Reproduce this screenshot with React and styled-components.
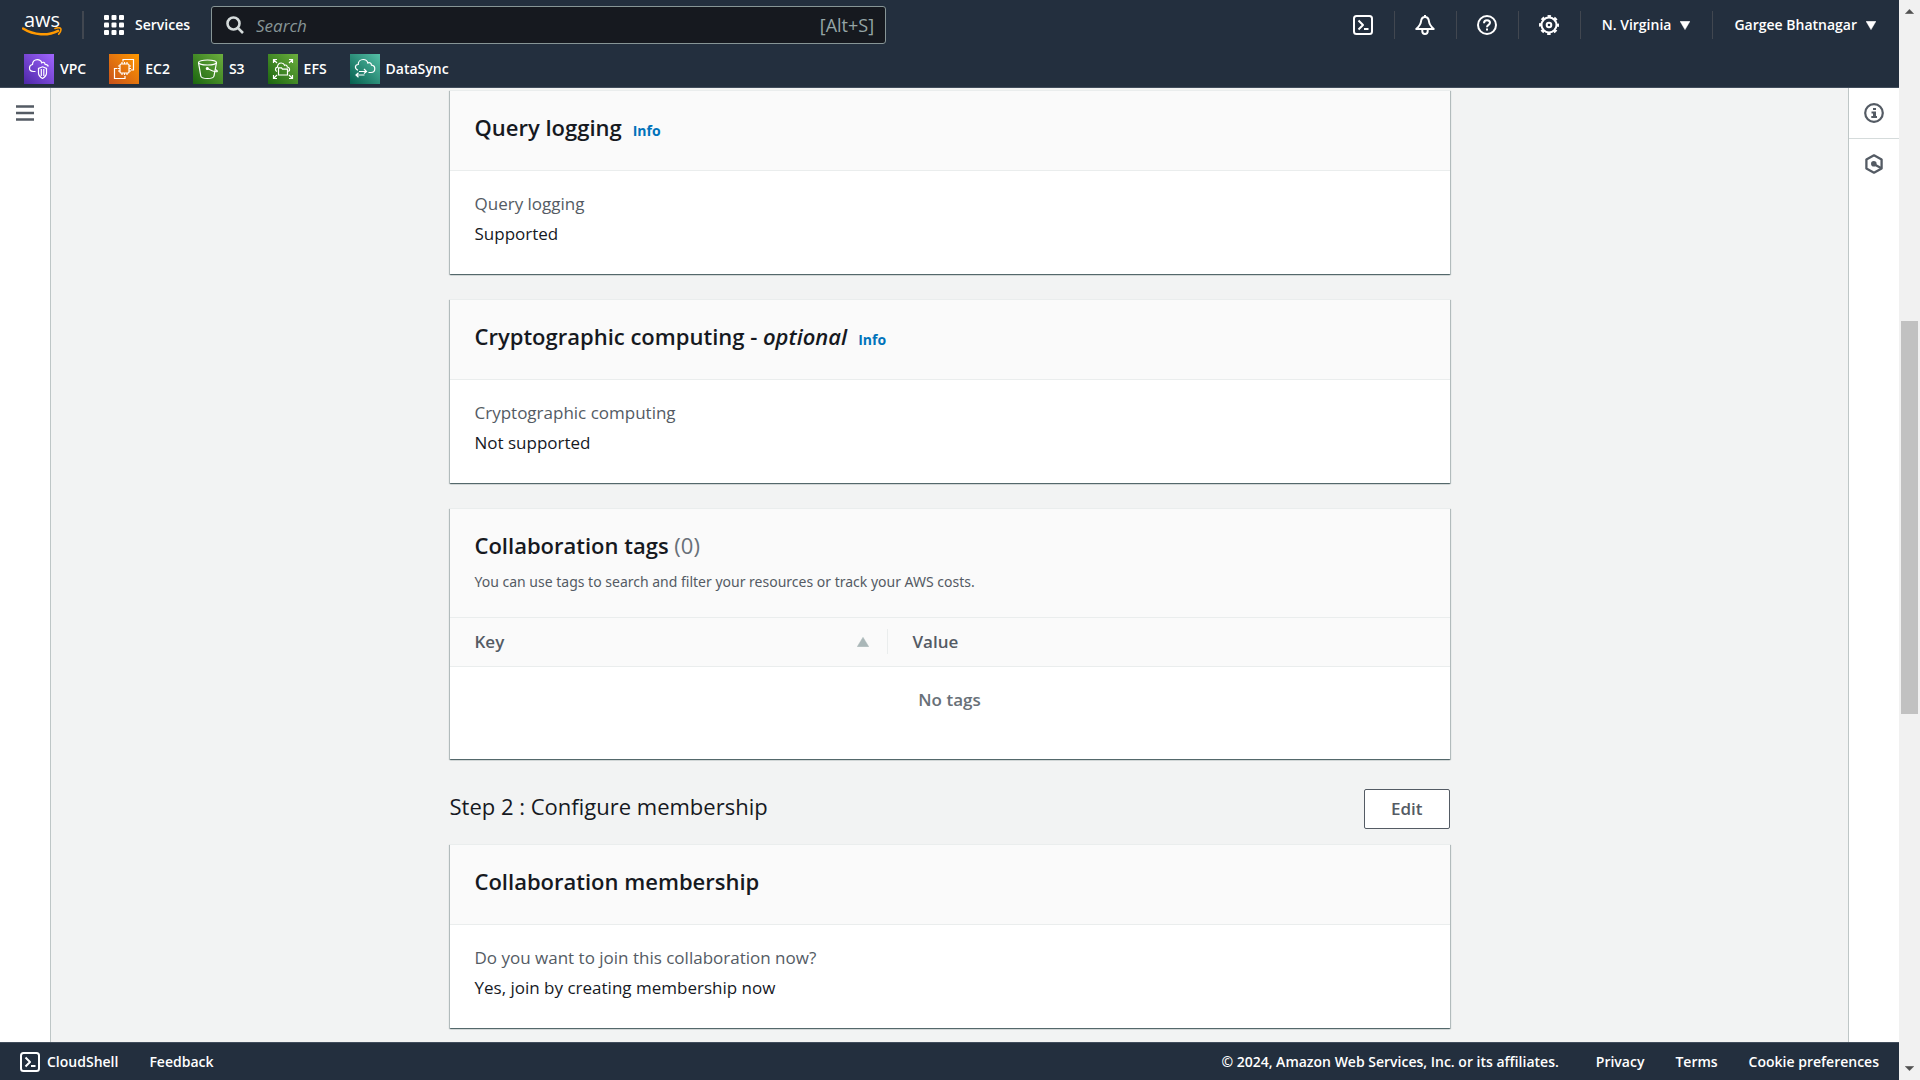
import styled, { createGlobalStyle } from "styled-components";

const GlobalStyle = createGlobalStyle`
  * {
    box-sizing: border-box;
  }

  body {
    margin: 0;
    background-color: #f2f3f3;
    color: #16191f;
    font-family: "Open Sans", "Noto Sans", sans-serif;
    font-size: 17px;
    line-height: 25px;
  }

  button,
  input {
    font: inherit;
  }
`;

const Container = styled.div`
  height: 100vh;
  display: flex;
`;

const Frame = styled.div`
  flex: 1;
  min-width: 0;
  display: flex;
  flex-direction: column;
`;

/* header */

const Header = styled.header`
  background-color: #232f3e;
  border-bottom: 1px solid #414d5c;
  color: white;
`;

const TopBar = styled.div`
  height: 50px;
  display: flex;
  align-items: center;
  justify-content: space-between;
`;

const TopGroup = styled.div`
  display: flex;
  align-items: center;
  flex: ${(props) => (props.$grow ? "1" : "none")};
  min-width: 0;
`;

const Logo = styled.a`
  width: 40px;
  margin: 0 20px 0 22px;
  display: flex;
  flex-direction: column;
  align-items: center;
  color: white;
  font-size: 20px;
  font-weight: 500;
  line-height: 15px;
  text-decoration: none;
`;

const Divider = styled.span`
  flex: none;
  width: ${(props) => (props.$thick ? "2px" : "1px")};
  height: 28px;
  background-color: #414750;
`;

const BarButton = styled.button`
  flex: none;
  display: flex;
  align-items: center;
  gap: ${(props) => props.$gap || "11px"};
  padding: ${(props) => props.$padding || "0 21px 0 20px"};
  border: none;
  background: none;
  color: white;
  font-size: 14px;
  font-weight: 600;
  line-height: 20px;
  white-space: nowrap;
  cursor: pointer;
`;

const Search = styled.label`
  flex: 0 1 675px;
  height: 38px;
  display: flex;
  align-items: center;
  gap: 12px;
  padding: 0 11px 0 14px;
  border: 1px solid #879596;
  border-radius: 3px;
  background-color: #16191f;
  color: #95a5a6;
`;

const SearchInput = styled.input`
  flex: 1;
  min-width: 0;
  padding: 0;
  border: none;
  outline: none;
  background: none;
  color: white;

  &::placeholder {
    color: #879596;
    font-style: italic;
    opacity: 1;
  }
`;

const Hint = styled.span`
  font-size: 18px;
`;

const Favorites = styled.nav`
  height: 37px;
  display: flex;
  align-items: center;
  gap: 23px;
  padding: 0 24px;
`;

const Favorite = styled.a`
  display: flex;
  align-items: center;
  gap: 6px;
  color: white;
  font-size: 14px;
  font-weight: 600;
  text-decoration: none;
`;

/* body */

const Body = styled.div`
  flex: 1;
  min-height: 0;
  display: flex;
`;

const LeftRail = styled.aside`
  flex: none;
  width: 51px;
  background-color: white;
  border-right: 1px solid #bec6c6;
`;

const RightRail = styled.aside`
  flex: none;
  width: 51px;
  background-color: white;
  border-left: 1px solid #bec6c6;
`;

const RailButton = styled.button`
  width: 100%;
  height: 51px;
  display: flex;
  align-items: center;
  justify-content: center;
  padding: 0;
  border: none;
  border-bottom: 1px solid ${(props) => (props.$line ? "#d5dbdb" : "transparent")};
  background: none;
  color: #545b64;
  cursor: pointer;
`;

const Main = styled.main`
  flex: 1;
  min-width: 0;
  overflow: hidden;
  padding: 2px 20px 0;
`;

const Content = styled.div`
  max-width: 1000px;
  margin: 0 auto;
`;

const Card = styled.section`
  margin-bottom: 25px;
  background-color: white;
  border-top: 1px solid #eaeded;
  box-shadow: 0 1px 1px 0 rgba(0, 28, 36, 0.45),
    1px 1px 1px 0 rgba(0, 28, 36, 0.2), -1px 1px 1px 0 rgba(0, 28, 36, 0.2);
`;

const CardHeader = styled.div`
  padding: ${(props) => (props.$described ? "22px 25px 24px" : "22px 25px 29px")};
  background-color: #fafafa;
  border-bottom: 1px solid #eaeded;
`;

const CardTitle = styled.h2`
  margin: 0;
  font-size: 22px;
  font-weight: 600;
  line-height: 28px;
`;

const Counter = styled.span`
  color: #687078;
  font-weight: 400;
`;

const InfoLink = styled.a`
  margin-left: 11px;
  color: #0073bb;
  font-size: 14px;
  font-weight: 700;
  line-height: 14px;
  text-decoration: none;
`;

const Description = styled.p`
  margin: 12px 0 0;
  color: #545b64;
  font-family: "Noto Sans", "Open Sans", sans-serif;
  font-size: 14px;
  line-height: 22px;
`;

const Details = styled.dl`
  margin: 0;
  padding: 20px 25px 28px;
`;

const Term = styled.dt`
  color: #545b64;
  margin-bottom: 5px;
`;

const Value = styled.dd`
  margin: 0;
`;

const TagTable = styled.table`
  width: 100%;
  border-collapse: collapse;
  table-layout: fixed;
`;

const HeadCell = styled.th`
  width: ${(props) => props.$width || "auto"};
  padding: 11px 0 12px;
  background-color: #fafafa;
  border-bottom: 1px solid #eaeded;
  color: #545b64;
  font-weight: 600;
  text-align: left;
`;

const HeadInner = styled.div`
  display: flex;
  align-items: center;
  justify-content: space-between;
  padding: 0 18px 0 25px;
  border-right: 1px solid ${(props) => (props.$line ? "#eaeded" : "transparent")};
`;

const EmptyCell = styled.td`
  height: 92px;
  padding: 20px 0 47px;
  color: #687078;
  font-weight: 600;
  text-align: center;
`;

const StepRow = styled.div`
  display: flex;
  align-items: flex-start;
  justify-content: space-between;
  margin: 30px 0 15px;
`;

const StepTitle = styled.h2`
  margin: 3px 0 0;
  font-size: 22px;
  font-weight: 400;
  line-height: 28px;
`;

const EditButton = styled.button`
  height: 40px;
  padding: 0 26px 2px;
  border: 1px solid #545b64;
  border-radius: 2px;
  background-color: white;
  color: #545b64;
  font-weight: 600;
  cursor: pointer;
`;

/* footer */

const Footer = styled.footer`
  height: 38px;
  display: flex;
  align-items: center;
  justify-content: space-between;
  padding: 0 20px;
  background-color: #232f3e;
  border-top: 1px solid #414d5c;
  color: white;
  font-size: 14px;
  font-weight: 600;
`;

const FooterGroup = styled.div`
  display: flex;
  align-items: center;
  gap: 31px;
`;

const Copyright = styled.span`
  padding-right: 6px;
`;

const FooterLink = styled.a`
  display: flex;
  align-items: center;
  gap: 7px;
  color: white;
  text-decoration: none;
`;

/* page scroll bar */

const ScrollTrack = styled.div`
  flex: none;
  width: 21px;
  display: flex;
  flex-direction: column;
  align-items: center;
  padding: 9px 0;
  background-color: #f1f1f1;
`;

const ScrollGap = styled.div`
  flex: ${(props) => props.$size} 0 0;
`;

const ScrollThumb = styled.div`
  flex: 393 0 0;
  width: 17px;
  background-color: #c1c1c1;
`;

const Caret = ({ width = 10, height = 9, up, color = "currentColor" }) => (
  <svg width={width} height={height} viewBox="0 0 10 9" preserveAspectRatio="none" aria-hidden="true">
    <path d={up ? "M5 0.3 9.8 8.7H0.2z" : "M0 0.3H10L5 8.7z"} fill={color} stroke={color} strokeWidth="0.4" strokeLinejoin="round" />
  </svg>
);

const Icon = ({ size = 20, children, stroke = 2 }) => (
  <svg
    width={size}
    height={size}
    viewBox="0 0 20 20"
    fill="none"
    stroke="currentColor"
    strokeWidth={stroke}
    strokeLinejoin="round"
    aria-hidden="true"
  >
    {children}
  </svg>
);

const TerminalIcon = () => (
  <Icon>
    <rect x="1" y="1" width="18" height="18" rx="2.5" />
    <path d="M5.5 5.5 10 10l-4.500 4.500M11 14h4.500" />
  </Icon>
);

const BellIcon = () => (
  <Icon>
    <path d="M10 0v2M10 2C7.600 2 6.300 3.700 6 6.500 5.700 9.500 4 11.500 1.300 14h17.400C16 11.500 14.300 9.500 14 6.500 13.700 3.700 12.400 2 10 2z" />
    <path d="M7.300 14.500v1.800a2.700 2.700 0 0 0 5.400 0v-1.800" />
  </Icon>
);

const HelpIcon = () => (
  <Icon>
    <circle cx="10" cy="10" r="9" />
    <path d="M7 8.200C7 6.200 8.200 5.200 10 5.200s3 1 3 2.600c0 2-3 2.200-3 4.400M10 13.500v2" />
  </Icon>
);

const GearIcon = () => (
  <Icon>
    <circle cx="10" cy="10" r="7.500" />
    <circle cx="10" cy="10" r="9" strokeDasharray="3.534 3.534" strokeDashoffset="1.767" />
    <circle cx="10" cy="10" r="2.300" />
  </Icon>
);

const GridIcon = () => (
  <svg width="20" height="20" viewBox="0 0 20 20" fill="currentColor" aria-hidden="true">
    {[0, 7.5, 15].map((y) =>
      [0, 7.5, 15].map((x) => <rect key={`${x}-${y}`} x={x} y={y} width="5" height="5" rx="1" />)
    )}
  </svg>
);

const SearchIcon = () => (
  <svg width="18" height="18" viewBox="0 0 18 18" fill="none" stroke="#d5dbdb" strokeWidth="2.600" aria-hidden="true">
    <circle cx="7.500" cy="7.500" r="6" />
    <path d="M11.800 11.800 17 17" />
  </svg>
);

const MenuIcon = () => (
  <svg width="18" height="16" viewBox="0 0 18 16" fill="none" stroke="currentColor" strokeWidth="2.400" aria-hidden="true">
    <path d="M0 1.500h18M0 8h18M0 14.500h18" />
  </svg>
);

const InfoIcon = () => (
  <Icon stroke={2.2}>
    <circle cx="10" cy="10" r="8.800" />
    <path d="M9 5h3v2H9zM7.500 8.500H12v4.500h1v2H7.300v-2H9v-2.500H7.500z" fill="currentColor" stroke="none" />
  </Icon>
);

const HexIcon = () => (
  <Icon stroke={2.3}>
    <path d="M10 1.300 17.600 5.500v9L10 18.700 2.400 14.500v-9z" />
    <circle cx="9.800" cy="9.800" r="2.800" fill="currentColor" stroke="none" />
    <path d="M10.500 10.500 17 14" />
  </Icon>
);

const ServiceTile = ({ id, from, to, children }) => (
  <svg width="30" height="30" viewBox="0 0 30 30" aria-hidden="true">
    <defs>
      <linearGradient id={id} x1="0" y1="1" x2="1" y2="0">
        <stop offset="0" stopColor={from} />
        <stop offset="1" stopColor={to} />
      </linearGradient>
    </defs>
    <rect width="30" height="30" fill={`url(#${id})`} />
    <g fill="none" stroke="white" strokeWidth="1.200">
      {children}
    </g>
  </svg>
);

const services = [
  {
    name: "VPC",
    from: "#4d27a8",
    to: "#a166ff",
    art: (
      <>
        <path d="M11.500 17.500H9.200C7 17.300 5.500 16 5.500 14c0-1.900 1.300-3.200 3-3.500C8.500 7.500 10.500 5.600 13.300 5.600c2.200 0 3.900 1.200 4.500 3.200 1-1 3-.6 3.300 1.500 1.700.1 2.900.8 3.200 2.200" />
        <path d="M18.500 12.800 22.500 14.500v4.500c0 2.500-1.500 4-4 5.400-2.500-1.400-4-2.900-4-5.400v-4.500zM17.300 15v7M19.800 15v7" />
      </>
    ),
  },
  {
    name: "EC2",
    from: "#c8511b",
    to: "#ff9900",
    art: (
      <>
        <path d="M14 7.500V5.500h10.500V16H22M8.500 14.500h-3v10H16V22" />
        <rect x="11" y="10" width="9" height="9" rx="1" />
        <path d="M13 8v2M15.500 8v2M18 8v2M13 19v2M15.500 19v2M18 19v2M9 12h2M9 14.500h2M9 17h2M20 12h2M20 14.500h2M20 17h2" />
      </>
    ),
  },
  {
    name: "S3",
    from: "#1b660f",
    to: "#6cae3e",
    art: (
      <>
        <ellipse cx="14.500" cy="8.500" rx="9" ry="2.500" />
        <path d="M5.500 8.700 7.800 22c.3 1.700 2.700 2.500 6.700 2.500s6.200-.8 6.500-2.500l2.500-13.300" />
        <circle cx="14.300" cy="14.500" r="1" fill="white" />
        <path d="M15 14.800c4 2.200 7 3.200 9 2.900 1-.3-.3-1.500-1.900-2.300" />
      </>
    ),
  },
  {
    name: "EFS",
    from: "#1b660f",
    to: "#6cae3e",
    art: (
      <>
        <path d="M5.500 9V5.500H9M5.500 5.500l3.500 3.500M21 5.500h3.500V9M24.500 5.500 21 9M5.500 21v3.500H9M5.500 24.500 9 21M21 24.500h3.500V21M24.500 24.500 21 21" />
        <path d="M9 17.500c-2-.6-2.200-4 .5-4.400.1-3 2-4.100 3.700-4.100 1.800 0 2.900.9 3.400 2.300 1.200-.7 2.600 0 2.700 1.700 2.700.3 3 3.600 1 4.500" />
        <path d="M10.500 21V13.800h3l1 1.400h5V21z" />
      </>
    ),
  },
  {
    name: "DataSync",
    from: "#055f4e",
    to: "#56c0a7",
    art: (
      <>
        <path d="M8 16.200C4.300 14.800 4.800 10.700 8.200 10.500c0-3 2.200-5 5-5 2.400 0 4.100 1.300 4.700 3.500 1.900-1 3.500.1 3.600 2.200 4.400.4 4.500 7.200-.5 7.300h-2.500" />
        <path d="M9 17.500h7.500M14 15l2.500 2.500-2.500 2M14.500 21H6M8.500 18.700 6 21l2.500 2.300" />
      </>
    ),
  },
];

const InfoCard = ({ title, optional, info, term, value }) => (
  <Card>
    <CardHeader>
      <CardTitle>
        {title}
        {optional && (
          <>
            {" - "}
            <i>optional</i>
          </>
        )}
        {info && <InfoLink href="#info">Info</InfoLink>}
      </CardTitle>
    </CardHeader>
    <Details>
      <Term>{term}</Term>
      <Value>{value}</Value>
    </Details>
  </Card>
);

const App = () => {
  return (
    <Container>
      <GlobalStyle />
      <Frame>
        <Header>
          <TopBar>
            <TopGroup $grow>
              <Logo href="#home">
                <span>aws</span>
                <svg width="40" height="11" viewBox="0 0 40 11" aria-hidden="true">
                  <path d="M1 1.500C12 8.500 26 9 36 3.800" fill="none" stroke="#ff9900" strokeWidth="2.600" strokeLinecap="round" />
                  <path d="M33 1.500c2.500-.9 5-.8 5.700 0 .5 1.200-.3 3.800-2 5.600" fill="none" stroke="#ff9900" strokeWidth="1.600" strokeLinecap="round" />
                </svg>
              </Logo>
              <Divider $thick />
              <BarButton>
                <GridIcon />
                Services
              </BarButton>
              <Search>
                <SearchIcon />
                <SearchInput type="text" placeholder="Search" aria-label="Search" />
                <Hint>[Alt+S]</Hint>
              </Search>
            </TopGroup>
            <TopGroup>
              <BarButton aria-label="CloudShell">
                <TerminalIcon />
              </BarButton>
              <Divider />
              <BarButton aria-label="Notifications">
                <BellIcon />
              </BarButton>
              <Divider />
              <BarButton aria-label="Help">
                <HelpIcon />
              </BarButton>
              <Divider />
              <BarButton aria-label="Settings">
                <GearIcon />
              </BarButton>
              <Divider />
              <BarButton $gap="9px" $padding="0 22px 0 21px">
                N. Virginia
                <Caret />
              </BarButton>
              <Divider />
              <BarButton $gap="9px" $padding="0 23px 0 21px">
                Gargee Bhatnagar
                <Caret />
              </BarButton>
            </TopGroup>
          </TopBar>
          <Favorites>
            {services.map((service) => (
              <Favorite key={service.name} href={`#${service.name}`}>
                <ServiceTile id={`tile-${service.name}`} from={service.from} to={service.to}>
                  {service.art}
                </ServiceTile>
                {service.name}
              </Favorite>
            ))}
          </Favorites>
        </Header>

        <Body>
          <LeftRail>
            <RailButton aria-label="Open navigation">
              <MenuIcon />
            </RailButton>
          </LeftRail>

          <Main>
            <Content>
              <InfoCard title="Query logging" info term="Query logging" value="Supported" />
              <InfoCard
                title="Cryptographic computing"
                optional
                info
                term="Cryptographic computing"
                value="Not supported"
              />

              <Card>
                <CardHeader $described>
                  <CardTitle>
                    Collaboration tags <Counter>(0)</Counter>
                  </CardTitle>
                  <Description>
                    You can use tags to search and filter your resources or track your AWS costs.
                  </Description>
                </CardHeader>
                <TagTable>
                  <thead>
                    <tr>
                      <HeadCell $width="438px">
                        <HeadInner $line>
                          Key
                          <Caret up width={12} height={10} color="#aab7b8" />
                        </HeadInner>
                      </HeadCell>
                      <HeadCell>
                        <HeadInner>Value</HeadInner>
                      </HeadCell>
                    </tr>
                  </thead>
                  <tbody>
                    <tr>
                      <EmptyCell colSpan={2}>No tags</EmptyCell>
                    </tr>
                  </tbody>
                </TagTable>
              </Card>

              <StepRow>
                <StepTitle>Step 2 : Configure membership</StepTitle>
                <EditButton>Edit</EditButton>
              </StepRow>

              <InfoCard
                title="Collaboration membership"
                term="Do you want to join this collaboration now?"
                value="Yes, join by creating membership now"
              />
            </Content>
          </Main>

          <RightRail>
            <RailButton $line aria-label="Info panel">
              <InfoIcon />
            </RailButton>
            <RailButton aria-label="Shortcuts">
              <HexIcon />
            </RailButton>
          </RightRail>
        </Body>

        <Footer>
          <FooterGroup>
            <FooterLink href="#cloudshell">
              <TerminalIcon />
              CloudShell
            </FooterLink>
            <FooterLink href="#feedback">Feedback</FooterLink>
          </FooterGroup>
          <FooterGroup>
            <Copyright>© 2024, Amazon Web Services, Inc. or its affiliates.</Copyright>
            <FooterLink href="#privacy">Privacy</FooterLink>
            <FooterLink href="#terms">Terms</FooterLink>
            <FooterLink href="#cookies">Cookie preferences</FooterLink>
          </FooterGroup>
        </Footer>
      </Frame>

      <ScrollTrack aria-hidden="true">
        <Caret width={9} height={5} up color="#505050" />
        <ScrollGap $size={307} />
        <ScrollThumb />
        <ScrollGap $size={352} />
        <Caret width={9} height={5} color="#505050" />
      </ScrollTrack>
    </Container>
  );
};

export default App;
